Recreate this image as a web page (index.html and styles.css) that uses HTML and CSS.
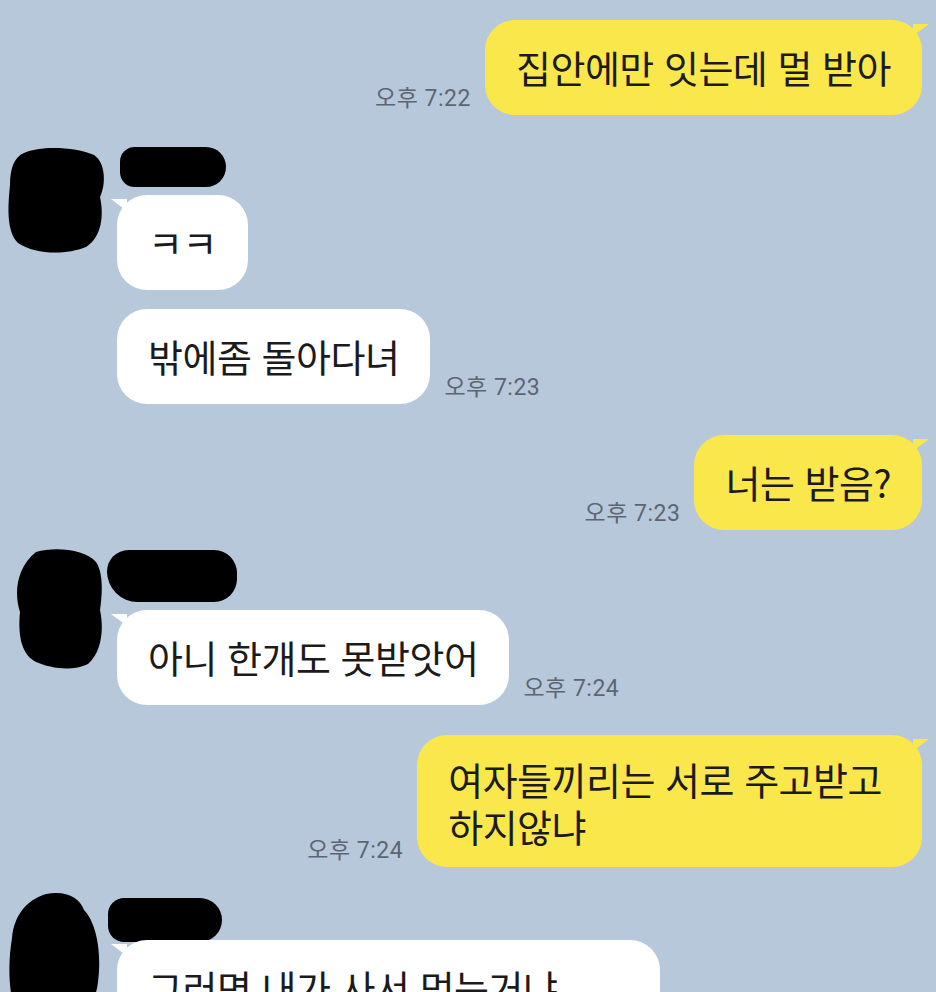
FILE: index.html
```html
<!DOCTYPE html>
<html lang="ko">
<head>
    <meta charset="UTF-8">
    <meta name="viewport" content="width=device-width, initial-scale=1.0">
    <title>채팅</title>
    <link rel="stylesheet" href="styles.css">
</head>
<body>
    <div class="chat">
        <div class="row mine">
            <span class="time">오후 7:22</span>
            <div class="bubble yellow tail-right">집안에만 잇는데 멀 받아</div>
        </div>

        <div class="group g1">
            <div class="avatar">
                <svg viewBox="0 0 100 110" width="100" height="110">
                    <path d="M18 8 C35 0 70 2 88 10 C100 18 100 40 94 52 C98 70 96 92 80 102 C60 110 30 110 12 98 C0 86 2 60 4 40 C4 24 8 12 18 8 Z" fill="#000"/>
                </svg>
            </div>
            <div class="col">
                <div class="name n1"></div>
                <div class="row">
                    <div class="bubble white tail-left">ㅋㅋ</div>
                </div>
                <div class="row">
                    <div class="bubble white">밖에좀 돌아다녀</div>
                    <span class="time">오후 7:23</span>
                </div>
            </div>
        </div>

        <div class="row mine m2">
            <span class="time">오후 7:23</span>
            <div class="bubble yellow tail-right">너는 받음?</div>
        </div>

        <div class="group g2">
            <div class="avatar">
                <svg viewBox="0 0 100 122" width="100" height="122">
                    <path d="M30 4 C50 -2 80 2 90 14 C98 26 96 48 94 62 C98 80 96 104 82 116 C66 124 44 120 30 114 C14 106 12 84 14 64 C8 46 10 20 30 4 Z" fill="#000"/>
                </svg>
            </div>
            <div class="col">
                <div class="name n2"></div>
                <div class="row">
                    <div class="bubble white tail-left">아니 한개도 못받앗어</div>
                    <span class="time">오후 7:24</span>
                </div>
            </div>
        </div>

        <div class="row mine m3">
            <span class="time">오후 7:24</span>
            <div class="bubble yellow tail-right multi">여자들끼리는 서로 주고받고<br>하지않냐</div>
        </div>

        <div class="group g3">
            <div class="avatar">
                <svg viewBox="0 0 100 120" width="100" height="120">
                    <path d="M40 2 C60 -2 74 6 78 18 C90 30 96 60 92 90 C90 110 80 120 60 120 L10 120 C2 100 2 70 6 46 C8 24 20 8 40 2 Z" fill="#000"/>
                </svg>
            </div>
            <div class="col">
                <div class="name n3"></div>
                <div class="row">
                    <div class="bubble white tail-left last">그러면 내가 사서 먹는거냐</div>
                </div>
            </div>
        </div>
    </div>
</body>
</html>
```

FILE: styles.css
```css
* {
    margin: 0;
    padding: 0;
    box-sizing: border-box;
}

body {
    background: #b7c8db;
    font-family: "Noto Sans CJK KR", "Noto Sans", sans-serif;
    width: 936px;
    height: 992px;
    overflow: hidden;
}

.chat {
    display: flex;
    flex-direction: column;
    padding: 20px 14px 0 6px;
}

.row {
    display: flex;
    align-items: flex-end;
    gap: 14px;
}

.mine {
    justify-content: flex-end;
}

.m2 {
    margin-top: 31px;
}

.m3 {
    margin-top: 30px;
}

.bubble {
    position: relative;
    font-size: 38px;
    line-height: 42px;
    color: #1b1b1b;
    padding: 26px 31px 27px;
    border-radius: 30px;
    letter-spacing: -0.5px;
}

.multi {
    line-height: 47px;
    padding: 20px 40px 18px 31px;
}

.last {
    min-width: 543px;
}

.yellow {
    background: #fae74b;
}

.white {
    background: #ffffff;
}

.tail-right::after {
    content: "";
    position: absolute;
    top: 4px;
    right: -7px;
    border-left: 16px solid #fae74b;
    border-bottom: 12px solid transparent;
}

.tail-left::before {
    content: "";
    position: absolute;
    top: 4px;
    left: -6px;
    border-right: 16px solid #ffffff;
    border-bottom: 12px solid transparent;
}

.time {
    font-family: Roboto, "Noto Sans CJK KR", sans-serif;
    font-size: 23px;
    color: #5c6673;
    letter-spacing: 0.5px;
    line-height: 1;
    padding-bottom: 5px;
}

.group {
    display: flex;
    gap: 11px;
}

.g1 {
    margin-top: 30px;
}

.g2 {
    margin-top: 18px;
}

.g3 {
    margin-top: 25px;
}

.avatar {
    width: 100px;
    flex-shrink: 0;
}

.col {
    display: flex;
    flex-direction: column;
    gap: 19px;
}

.name {
    background: #000;
    border-radius: 22px 30px 30px 22px;
    margin-bottom: -11px;
}

.n1 {
    width: 106px;
    height: 40px;
    margin-top: 2px;
    margin-left: 3px;
}

.n2 {
    width: 130px;
    height: 52px;
    margin-top: 2px;
    margin-left: -10px;
    border-radius: 28px 30px 30px 40px;
}

.n3 {
    width: 114px;
    height: 44px;
    margin-top: 6px;
    margin-left: -9px;
    margin-bottom: -21px;
}
```
